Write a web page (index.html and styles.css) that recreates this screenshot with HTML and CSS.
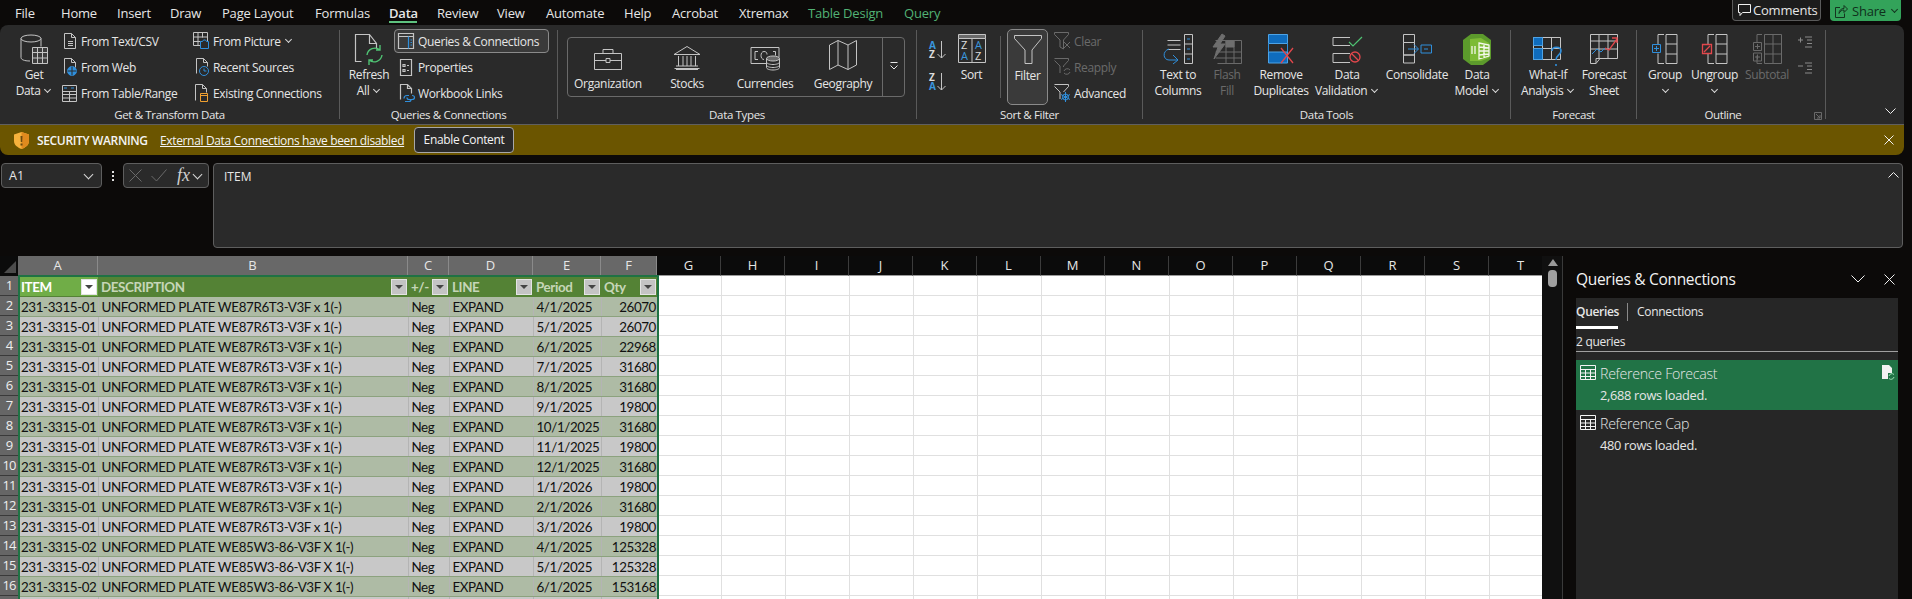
FILE: index.html
```html
<!doctype html>
<html lang="en-us">
<head>
<title>Book1 - Excel</title>
<link rel="stylesheet" href="styles.css">
</head>
<body>

<div class="topbar">
  <div class="tabs">
    <span>File</span><span>Home</span><span>Insert</span><span>Draw</span><span>Page Layout</span><span>Formulas</span>
    <span class="on">Data</span><span>Review</span><span>View</span><span>Automate</span><span>Help</span><span>Acrobat</span><span>Xtremax</span>
    <span class="ctx">Table Design</span><span class="ctx">Query</span>
  </div>
  <div class="top-btns">
    <div class="comments">
      <svg width="13" height="14" viewBox="0 0 13 14"><path class="wh" d="M.5 1.500h12v8H4.500l-2.500 3v-3H.5z"/></svg>
      Comments
    </div>
    <div class="share">
      <svg width="13" height="14" viewBox="0 0 13 14"><path class="dk" d="M5 3.500H.5v10h9v-4M4 9.500c0-3 2-5 5-5v-3l3.500 3.500-3.500 3.500v-2.500c-2 0-4 1-5 3.500z"/></svg>
      Share <i class="chev dark"></i>
    </div>
  </div>
</div>

<div class="ribbon">

  <div class="grp g1">
    <div class="body">
      <div class="big b-get">
        <div class="ic"><svg width="28" height="31" viewBox="0 0 28 31"><ellipse cx="11" cy="4.500" rx="10" ry="3.500"/><path d="M1 4.500v19c0 2 3 3.500 9 3.500M21 4.500v8"/><path class="fillg" d="M12.500 13.500h15v16h-15zM12.500 18.500h15M12.500 24h15M17.500 13.500v16M22.500 13.500v16"/></svg></div>
        <span>Get</span><span>Data <i class="chev"></i></span>
      </div>
      <div class="col c1">
        <div class="sm"><svg width="17" height="16" viewBox="0 0 17 16"><path d="M3.500.5h7l4 4v11h-11zM10.500.5v4h4M7 8.500h5M7 10.500h5M7 12.500h5"/></svg>From Text/CSV</div>
        <div class="sm"><svg width="17" height="18" viewBox="0 0 17 18"><path d="M3.500 15.500V.5h7l4 4v5M10.500.5v4h4"/><circle class="bf" cx="11" cy="13" r="4.500"/><path class="bk" d="M6.500 13h9M11 8.500v9"/></svg>From Web</div>
        <div class="sm"><svg width="17" height="17" viewBox="0 0 17 17"><path d="M1.500.5h14v16h-14zM1.500 6.500h14M1.500 9.500h14M1.500 13h14M8.500 6.500v10"/><path class="b" d="M3 3h3M10 3h3"/></svg>From Table/Range</div>
      </div>
      <div class="col c2">
        <div class="sm"><svg width="17" height="18" viewBox="0 0 17 18"><path d="M.5.5h14v9M.5.5v13h7M.5 5h14M.5 9.500h7M5 .5v13M9.500.5v5"/><path class="bfl" d="M7.500 9.500h2l1-1.500h2l1 1.500h2v7h-8z"/><circle class="bk" cx="11.500" cy="13" r="1.500"/></svg>From Picture <i class="chev"></i></div>
        <div class="sm"><svg width="17" height="18" viewBox="0 0 17 18"><path d="M3.500 15.500V.5h7l4 4v4M10.500.5v4h4"/><circle class="b" cx="11" cy="13" r="4.500"/><path class="b" d="M11 10.500V13h2.500"/></svg>Recent Sources</div>
        <div class="sm"><svg width="17" height="18" viewBox="0 0 17 18"><path d="M2.500 16.500V.5h7l4 4v4M9.500.5v4h4"/><path class="o" d="M7.500 9.500h7v8h-7zM7.500 11.500h7"/></svg>Existing Connections</div>
      </div>
    </div>
    <div class="lbl">Get &amp; Transform Data</div>
  </div>

  <div class="grp g2">
    <div class="body">
      <div class="big b-ref">
        <div class="ic"><svg width="30" height="31" viewBox="0 0 30 31"><path d="M7.500 27.500h-6V.5h14l7 9v5M15.500.5v9h7"/><path class="g" d="M13 21a8 8 0 0 1 13-5M28 21a8 8 0 0 1-13 5M26 11v5h-4M15 31v-5h4"/></svg></div>
        <span>Refresh</span><span>All <i class="chev"></i></span>
      </div>
      <div class="col c3">
        <div class="sm sel"><svg width="17" height="16" viewBox="0 0 17 16"><path d="M.5.5h15v15H.5zM.5 3.500h15"/><path class="b" d="M10.500 3.500v12M12.500 7h1.500M12.500 9.500h1.500M12.500 12h1.500"/></svg>Queries &amp; Connections</div>
        <div class="sm"><svg width="17" height="17" viewBox="0 0 17 17"><path d="M2.500.5h11v16h-11zM5 5.500h2v2H5zM5 10.500h2v2H5zM9 6.500h2M9 11.500h2"/></svg>Properties</div>
        <div class="sm"><svg width="17" height="18" viewBox="0 0 17 18"><path d="M2.500 15.500V.5h7l4 4v5M9.500.5v4h4"/><path class="b" d="M6 14.500c0-2 1-3 3-3h2M14 11.500c2 0 2.500 1 2.500 2s-1 2-2.500 2h-3c-1.500 0-2-1-2-2M7 17.500h4c1.500 0 2-1 2-2"/></svg>Workbook Links</div>
      </div>
    </div>
    <div class="lbl">Queries &amp; Connections</div>
  </div>

  <div class="grp g3">
    <div class="body">
      <div class="types">
        <div class="type"><svg width="28" height="21" viewBox="0 0 28 21"><path d="M.5 4.500h27v16H.5zM9 4.500v-4h10v4M.5 11.500h11.500M16 11.500h11.500M12 9.500h4v4h-4z"/></svg>Organization</div>
        <div class="type"><svg width="28" height="24" viewBox="0 0 28 24"><path d="M1 8.500L14 .5l13 8zM3 8.500h22M1.500 22.500h25M3 20h22M3 23.500h22M5.500 10v10M10 10v10M14 10v10M18 10v10M22.500 10v10"/></svg>Stocks</div>
        <div class="type"><svg width="30" height="26" viewBox="0 0 30 26"><path d="M17 19.500H1V3.500h28v10"/><path d="M8 7.500H5v8h3M23 7.500h2.500v4M14 7.500c-4 0-4 8 0 8M14 7.500c2 0 3 1 3 3"/><ellipse class="fillh" cx="23" cy="14.500" rx="6.500" ry="2.500"/><path d="M16.500 14.500v9c0 1.500 3 2.500 6.500 2.500s6.500-1 6.500-2.500v-9M16.500 18c0 1.500 3 2.500 6.500 2.500s6.500-1 6.500-2.500M16.500 21c0 1.500 3 2.500 6.500 2.500s6.500-1 6.500-2.500"/></svg>Currencies</div>
        <div class="type"><svg width="28" height="30" viewBox="0 0 28 30"><path d="M.5 5L9 .5 19 5l8.500-4.500V25L19 29.500 9 25 .5 29.500zM9 .5V25M19 5v24.500"/></svg>Geography</div>
        <div class="more"><svg width="8" height="8" viewBox="0 0 8 8"><path d="M.5.500h7M.5 3.500L4 7l3.500-3.500"/></svg></div>
      </div>
    </div>
    <div class="lbl">Data Types</div>
  </div>

  <div class="grp g4">
    <div class="body">
      <div class="az">
        <svg width="17" height="18" viewBox="0 0 17 18"><text class="tb" x="0" y="8">A</text><text class="tw" x="0" y="17">Z</text><path d="M12.500 0v17M8.500 13l4 4 4-4"/></svg>
        <svg width="17" height="18" viewBox="0 0 17 18"><text class="tw" x="0" y="8">Z</text><text class="tb" x="0" y="17">A</text><path d="M12.500 0v17M8.500 13l4 4 4-4"/></svg>
      </div>
      <div class="big b-sort">
        <div class="ic"><svg width="28" height="29" viewBox="0 0 28 29"><path class="fillh" d="M.5.500h27v4H.5z"/><path d="M.5 4.500v24h27v-24M14 4.500v24"/><text class="tw big-t" x="3" y="15">Z</text><text class="tb big-t" x="3" y="26">A</text><text class="tb big-t" x="17" y="15">A</text><text class="tw big-t" x="17" y="26">Z</text></svg></div>
        <span>Sort</span>
      </div>
      <div class="vsep"></div>
      <div class="big b-filter">
        <div class="ic"><svg width="28" height="29" viewBox="0 0 28 29"><path d="M.5.500h27v3L18 15v13.500h-7V15L.5 3.500z"/></svg></div>
        <span>Filter</span>
      </div>
      <div class="col c4">
        <div class="sm off"><svg width="17" height="18" viewBox="0 0 17 18"><path class="dim" d="M.5.500h14v2L9.500 8v9L6 15V8L.5 2.500zM10 10l6 6M16 10l-6 6"/></svg>Clear</div>
        <div class="sm off"><svg width="17" height="18" viewBox="0 0 17 18"><path class="dim" d="M.5.500h14v2L9.500 8v1M6 15V8L.5 2.500M10 13a3.500 3.500 0 0 1 6 -1M16 14a3.500 3.500 0 0 1-6 1"/></svg>Reapply</div>
        <div class="sm"><svg width="17" height="18" viewBox="0 0 17 18"><path d="M.5.500h14v2L9.500 8M6 15V8L.5 2.500"/><circle class="b" cx="11.500" cy="13" r="3"/><path class="b" d="M11.500 8v10M7 10.500l9 5M16 10.500l-9 5"/></svg>Advanced</div>
      </div>
    </div>
    <div class="lbl">Sort &amp; Filter</div>
  </div>

  <div class="grp g5">
    <div class="body">
      <div class="big b-ttc">
        <div class="ic"><svg width="30" height="30" viewBox="0 0 30 30"><path d="M21.500.5h8v29h-8zM21.500 10h8M21.500 20h8"/><path class="b" d="M24 5h3M24 15h3M24 25h3"/><path d="M4.500 6.500h13M4.500 11h13M4.500 15.500h13"/><path class="b" d="M6 15c-7 2-6 11 0 11h8M10 21l5 5-5 4"/></svg></div>
        <span>Text to</span><span>Columns</span>
      </div>
      <div class="big b-ff off">
        <div class="ic"><svg width="30" height="30" viewBox="0 0 30 30"><path class="dim" d="M3.500 6.500h26v23h-24M14 6.500v23M22 6.500v23M3.500 18h26M3.500 24h26"/><path class="fillm" d="M10 0L1 13h5L2 25 13 10H8l5-8z"/><path class="fillm" d="M14 7h8v6h-8z"/></svg></div>
        <span>Flash</span><span>Fill</span>
      </div>
      <div class="big b-rd">
        <div class="ic"><svg width="26" height="30" viewBox="0 0 26 30"><path class="bs" d="M.5.500h19v9H.5zM.5 18h19v11H.5z"/><path class="b" d="M.5 9.500v8.500M19.500 9.500v8.500"/><path class="r" d="M13 14l12 15M25 14L13 29"/></svg></div>
        <span>Remove</span><span>Duplicates</span>
      </div>
      <div class="big b-dv">
        <div class="ic"><svg width="31" height="30" viewBox="0 0 31 30"><path d="M18 11.500H1v-8h17M18 19.500H1v9h17"/><path class="g2" d="M17 8l4 4 9-9"/><circle class="r" cx="23" cy="23" r="5"/><path class="r" d="M20 20l6 6"/></svg></div>
        <span>Data</span><span>Validation <i class="chev"></i></span>
      </div>
      <div class="big b-con">
        <div class="ic"><svg width="29" height="30" viewBox="0 0 29 30"><path d="M.5.500h11v8H.5zM.5 21h11v8H.5zM.5 8.500h11v12.500H.5z"/><path class="b" d="M5 15h10M11 10.500l4.500 4.500-4.500 4.500M18 11h10.500v8H18zM21 15h4"/></svg></div>
        <span>Consolidate</span>
      </div>
      <div class="big b-dm">
        <div class="ic"><svg width="28" height="31" viewBox="0 0 28 31"><path class="hex" d="M8 0h12l8 6v19l-8 6H8l-8-6V6z"/><path class="hex2" d="M7 5l11-1 8 5v15l-8 3H7z"/><path class="wg" d="M16 9l10 2v11l-10 3zM21 10v14M16 13l10 1M16 17h10M16 21l10-1"/><path class="wg" d="M12 12v8M9 16v-1M9 12v8"/></svg></div>
        <span>Data</span><span>Model <i class="chev"></i></span>
      </div>
    </div>
    <div class="lbl">Data Tools</div>
  </div>

  <div class="grp g6">
    <div class="body">
      <div class="big b-wi">
        <div class="ic"><svg width="30" height="32" viewBox="0 0 30 32"><path d="M.5 3.500h27v22H.5zM9.500 3.500v22M18.500 3.500v22M.5 14.500h27"/><path class="bs" d="M.5 3.500h9v8H.5zM.5 14.500h9v11H.5z"/><path class="b2" d="M19 17c0-5 9-5 9 0 0 4-5 4-5 9M23 30v2"/></svg></div>
        <span>What-If</span><span>Analysis <i class="chev"></i></span>
      </div>
      <div class="big b-fs">
        <div class="ic"><svg width="29" height="31" viewBox="0 0 29 31"><path d="M.5.500h27v24H10l-4 5H.5zM.5 7h27M.5 15h27M9 .5v24M18 .5v24M6 29.500v-5h4"/><path class="b" d="M2 20l5-5 4 3 4-4"/><path class="r" d="M15 14l4 2 8-11M22 4h5v5"/></svg></div>
        <span>Forecast</span><span>Sheet</span>
      </div>
    </div>
    <div class="lbl">Forecast</div>
  </div>

  <div class="grp g7">
    <div class="body">
      <div class="big b-gr">
        <div class="ic"><svg width="26" height="30" viewBox="0 0 26 30"><path d="M14 .5h11v29H14zM14 10h11M14 20h11M12 .5H6v10M12 29.500H6v-10"/><path class="bfl" d="M.5 10.500h8v8h-8z"/><path class="b" d="M2 14.500h5M4.500 12v5"/></svg></div>
        <span>Group</span><i class="chev solo"></i>
      </div>
      <div class="big b-un">
        <div class="ic"><svg width="26" height="30" viewBox="0 0 26 30"><path d="M14 .5h11v29H14zM14 10h11M14 20h11M12 .5H6v10M12 29.500H6v-10"/><path class="rf" d="M.5 10.500h9v9h-9zM2 18l6-6"/></svg></div>
        <span>Ungroup</span><i class="chev solo"></i>
      </div>
      <div class="big b-st off">
        <div class="ic"><svg width="29" height="30" viewBox="0 0 29 30"><path class="dim" d="M11.500.5h17v29h-17zM11.500 10h17M11.500 20h17M20 .5v29M9 .5H4v8M9 29.500H4v-8M.5 8.500h8v8h-8zM2 12.500h5M4.500 10v5M.5 19h8v8h-8zM2 23h5M4.500 20.500v5"/></svg></div>
        <span>Subtotal</span>
      </div>
      <div class="outl">
        <svg width="15" height="12" viewBox="0 0 15 12"><path class="dim2" d="M0 4h5M2.500 1.500v5M7 1h7M9 4h5M9 7.500h5M7 11h7"/></svg>
        <svg width="15" height="12" viewBox="0 0 15 12"><path class="dim2" d="M0 4h5M7 1h7M9 4h5M9 7.500h5M7 11h7"/></svg>
      </div>
    </div>
    <div class="lbl l7">Outline<svg class="launch" width="8" height="8" viewBox="0 0 8 8"><path class="dim" d="M.5 7.500V.5h7v7zM2 2l4 4M3 6h3V3"/></svg></div>
  </div>

  <div class="collapse"><svg width="11" height="7" viewBox="0 0 11 7"><path class="wh" d="M.5.500l5 5 5-5"/></svg></div>
</div>

<div class="warn">
  <svg class="shield" width="15" height="17" viewBox="0 0 15 17"><path class="sh" d="M7.500 0L15 2.500V9c0 4-3.500 6.500-7.500 8C3.500 15.500 0 13 0 9V2.500z"/><path class="sh2" d="M7.500 0L15 2.500V9c0 4-3.500 6.500-7.500 8z"/><path class="sh3" d="M6.500 4h2l-.300 6h-1.400zM6.500 11.500h2v2h-2z"/></svg>
  <b>SECURITY WARNING</b>
  <a>External Data Connections have been disabled</a>
  <div class="enable">Enable Content</div>
  <svg class="warn-x" width="10" height="10" viewBox="0 0 10 10"><path class="wh" d="M.5.500l9 9M9.500.500l-9 9"/></svg>
</div>

<div class="fbar">
  <div class="namebox">A1 <i class="chev lg"></i></div>
  <div class="dots"><i></i><i></i><i></i></div>
  <div class="fbtns">
    <svg width="13" height="13" viewBox="0 0 13 13"><path class="dim" d="M.5.500l12 12M12.500.500l-12 12"/></svg>
    <svg width="16" height="13" viewBox="0 0 16 13"><path class="dim" d="M.5 7l5 5L15.500.5"/></svg>
    <span class="fx">fx</span>
    <i class="chev lg"></i>
  </div>
  <div class="finput">
    ITEM
    <svg class="f-up" width="11" height="7" viewBox="0 0 11 7"><path class="wh" d="M.5 6.500l5-5 5 5"/></svg>
  </div>
</div>

<div class="work">
  <div class="sheet">
    <div class="cols">
      <div class="corner"><svg width="12" height="12" viewBox="0 0 12 12"><path class="tri" d="M12 0v12H0z"/></svg></div>
      <div class="ch sl a">A</div><div class="ch sl b-col">B</div><div class="ch sl c">C</div><div class="ch sl d">D</div><div class="ch sl e">E</div><div class="ch sl f">F</div>
      <div class="ch">G</div><div class="ch">H</div><div class="ch">I</div><div class="ch">J</div><div class="ch">K</div><div class="ch">L</div><div class="ch">M</div>
      <div class="ch">N</div><div class="ch">O</div><div class="ch">P</div><div class="ch">Q</div><div class="ch">R</div><div class="ch">S</div><div class="ch">T</div>
    </div>
    <div class="cells">
      <div class="rows">
        <div>1</div><div>2</div><div>3</div><div>4</div><div>5</div><div>6</div><div>7</div><div>8</div><div>9</div><div>10</div><div>11</div><div>12</div><div>13</div><div>14</div><div>15</div><div>16</div><div></div>
      </div>
      <div class="tblwrap">
        <table class="tbl">
          <colgroup><col class="w-a"><col class="w-b"><col class="w-c"><col class="w-d"><col class="w-e"><col class="w-f"></colgroup>
          <thead>
            <tr>
              <th class="first"><div class="th">ITEM<i class="fb fb1"></i></div></th>
              <th><div class="th">DESCRIPTION<i class="fb"></i></div></th>
              <th><div class="th">+/-<i class="fb"></i></div></th>
              <th><div class="th">LINE<i class="fb"></i></div></th>
              <th><div class="th">Period<i class="fb"></i></div></th>
              <th><div class="th">Qty<i class="fb"></i></div></th>
            </tr>
          </thead>
          <tbody>
            <tr><td>231-3315-01</td><td>UNFORMED PLATE WE87R6T3-V3F x 1(-)</td><td>Neg</td><td>EXPAND</td><td>4/1/2025</td><td class="n">26070</td></tr>
            <tr><td>231-3315-01</td><td>UNFORMED PLATE WE87R6T3-V3F x 1(-)</td><td>Neg</td><td>EXPAND</td><td>5/1/2025</td><td class="n">26070</td></tr>
            <tr><td>231-3315-01</td><td>UNFORMED PLATE WE87R6T3-V3F x 1(-)</td><td>Neg</td><td>EXPAND</td><td>6/1/2025</td><td class="n">22968</td></tr>
            <tr><td>231-3315-01</td><td>UNFORMED PLATE WE87R6T3-V3F x 1(-)</td><td>Neg</td><td>EXPAND</td><td>7/1/2025</td><td class="n">31680</td></tr>
            <tr><td>231-3315-01</td><td>UNFORMED PLATE WE87R6T3-V3F x 1(-)</td><td>Neg</td><td>EXPAND</td><td>8/1/2025</td><td class="n">31680</td></tr>
            <tr><td>231-3315-01</td><td>UNFORMED PLATE WE87R6T3-V3F x 1(-)</td><td>Neg</td><td>EXPAND</td><td>9/1/2025</td><td class="n">19800</td></tr>
            <tr><td>231-3315-01</td><td>UNFORMED PLATE WE87R6T3-V3F x 1(-)</td><td>Neg</td><td>EXPAND</td><td>10/1/2025</td><td class="n">31680</td></tr>
            <tr><td>231-3315-01</td><td>UNFORMED PLATE WE87R6T3-V3F x 1(-)</td><td>Neg</td><td>EXPAND</td><td>11/1/2025</td><td class="n">19800</td></tr>
            <tr><td>231-3315-01</td><td>UNFORMED PLATE WE87R6T3-V3F x 1(-)</td><td>Neg</td><td>EXPAND</td><td>12/1/2025</td><td class="n">31680</td></tr>
            <tr><td>231-3315-01</td><td>UNFORMED PLATE WE87R6T3-V3F x 1(-)</td><td>Neg</td><td>EXPAND</td><td>1/1/2026</td><td class="n">19800</td></tr>
            <tr><td>231-3315-01</td><td>UNFORMED PLATE WE87R6T3-V3F x 1(-)</td><td>Neg</td><td>EXPAND</td><td>2/1/2026</td><td class="n">31680</td></tr>
            <tr><td>231-3315-01</td><td>UNFORMED PLATE WE87R6T3-V3F x 1(-)</td><td>Neg</td><td>EXPAND</td><td>3/1/2026</td><td class="n">19800</td></tr>
            <tr><td>231-3315-02</td><td>UNFORMED PLATE WE85W3-86-V3F X 1(-)</td><td>Neg</td><td>EXPAND</td><td>4/1/2025</td><td class="n">125328</td></tr>
            <tr><td>231-3315-02</td><td>UNFORMED PLATE WE85W3-86-V3F X 1(-)</td><td>Neg</td><td>EXPAND</td><td>5/1/2025</td><td class="n">125328</td></tr>
            <tr><td>231-3315-02</td><td>UNFORMED PLATE WE85W3-86-V3F X 1(-)</td><td>Neg</td><td>EXPAND</td><td>6/1/2025</td><td class="n">153168</td></tr>
            <tr><td></td><td></td><td></td><td></td><td></td><td></td></tr>
          </tbody>
        </table>
      </div>
      <div class="blank"></div>
    </div>
  </div>

  <div class="vscroll">
    <svg width="10" height="7" viewBox="0 0 10 7"><path class="sc" d="M5 0l5 7H0z"/></svg>
    <div class="thumb"></div>
  </div>

  <div class="pane">
    <div class="pane-head">
      <span>Queries &amp; Connections</span>
      <svg class="p-down" width="14" height="8" viewBox="0 0 14 8"><path class="wh" d="M.5.500L7 7l6.500-6.500"/></svg>
      <svg class="p-x" width="11" height="11" viewBox="0 0 11 11"><path class="wh" d="M.5.500l10 10M10.500.500l-10 10"/></svg>
    </div>
    <div class="pane-body">
      <div class="pane-tabs"><span class="on">Queries</span><i></i><span>Connections</span></div>
      <div class="count">2 queries</div>
      <div class="q sel">
        <svg width="16" height="15" viewBox="0 0 16 15"><path class="wt" d="M.5.500h15v14H.5zM.5 4.500h15M.5 8h15M.5 11.500h15M5.500 4.500v10M10.500 4.500v10"/></svg>
        <div class="q-name">Reference Forecast</div>
        <svg class="q-doc" width="13" height="15" viewBox="0 0 13 15"><path class="docf" d="M0 0h7l3 3v5H6v6H0z"/><path class="q-arr" d="M7 11a3 3 0 0 1 5-1.500M12 12a3 3 0 0 1-5 1.500"/></svg>
        <div class="q-sub">2,688 rows loaded.</div>
      </div>
      <div class="q">
        <svg width="16" height="15" viewBox="0 0 16 15"><path class="wt" d="M.5.500h15v14H.5zM.5 4.500h15M.5 8h15M.5 11.500h15M5.500 4.500v10M10.500 4.500v10"/></svg>
        <div class="q-name">Reference Cap</div>
        <div class="q-sub">480 rows loaded.</div>
      </div>
    </div>
  </div>
</div>

</body>
</html>
```

FILE: styles.css
```css
html, body {
  margin: 0;
  padding: 0;
  height: 599px;
  overflow: hidden;
}
body {
  font: 12px "Open Sans", "Noto Sans", sans-serif;
  color: #e6e6e6;
  background: #0c0a09;
}
svg {
  display: block;
  fill: none;
  stroke: #c4c4c4;
  flex: none;
  overflow: visible;
}
.b { stroke: #2f8fdc; }
.b2 { stroke: #2f8fdc; stroke-width: 1.6; }
.bs { stroke: #4da3e6; fill: #0f6cbd; }
.bf { stroke: #2f8fdc; fill: #2f8fdc; }
.bfl { stroke: #2f8fdc; fill: #2b2b2b; }
.bk { stroke: #2a2a2a; }
.g { stroke: #4fc273; stroke-width: 1.4; }
.g2 { stroke: #4fc273; stroke-width: 1.2; }
.r { stroke: #e2474c; stroke-width: 1.3; }
.rf { stroke: #e2474c; fill: #2b2b2b; stroke-width: 1.3; }
.o { stroke: #f0a030; }
.dim { stroke: #6a6a6a; }
.dim2 { stroke: #8a8a8a; }
.wh { stroke: #f0f0f0; }
.dk { stroke: #14341f; }
.fillg { fill: #3c3c3c; }
.fillh { fill: #6a6a6a; }
.fillm { fill: #6e6e6e; stroke: #6e6e6e; }
.hex { fill: #5c9a2c; stroke: none; }
.hex2 { fill: #7dbb35; stroke: none; }
.wg { stroke: #f4f8ea; stroke-width: 1.3; }
.tb, .tw {
  font: 700 10px "Open Sans", sans-serif;
  stroke: none;
}
.tb { fill: #3a96dd; }
.tw { fill: #dcdcdc; }
.big-t { font-size: 11px; font-weight: 400; }

/* top strip */
.topbar {
  height: 25px;
  display: flex;
  justify-content: space-between;
}
.tabs {
  display: grid;
  grid-template-columns: 46px 56px 53px 52px 93px 74px 48px 60px 49px 78px 48px 67px 69px 96px 40px;
  padding-left: 15px;
  font-size: 13px;
  line-height: 26px;
  white-space: nowrap;
  letter-spacing: -.2px;
}
.tabs .on {
  font-weight: 600;
  position: relative;
}
.tabs .on::after {
  content: "";
  position: absolute;
  left: 0;
  width: 28px;
  top: 21px;
  height: 2px;
  background: #5ec27f;
}
.tabs .ctx { color: #52b275; }
.top-btns {
  display: flex;
  padding-right: 11px;
  gap: 9px;
}
.comments, .share {
  height: 21px;
  border-radius: 0 0 4px 4px;
  display: flex;
  align-items: center;
  font-size: 13px;
  letter-spacing: -.2px;
  box-sizing: border-box;
}
.comments {
  width: 89px;
  gap: 2px;
  border: 1px solid #5a5a5a;
  border-top: 0;
  padding-left: 5px;
  background: #1c1c1c;
}
.share {
  width: 71px;
  gap: 4px;
  padding-left: 5px;
  background: #33a35a;
  color: #10301c;
}

/* ribbon */
.ribbon {
  width: 1904px;
  height: 99px;
  background: #2a2a2a;
  border-radius: 8px 8px 0 0;
  display: flex;
  position: relative;
  border-bottom: 1px solid #5f5f5f;
  letter-spacing: -.35px;
}
.grp {
  height: 89px;
  margin-top: 5px;
  box-sizing: border-box;
  border-right: 1px solid #5a5a5a;
  flex: none;
}
.g1 { width: 340px; }
.g2 { width: 218px; }
.g3 { width: 359px; }
.g4 { width: 226px; }
.g5 { width: 368px; }
.g6 { width: 126px; }
.g7 { width: 189px; }
.body {
  height: 78px;
  margin-top: -1px;
  display: flex;
}
.lbl {
  height: 12px;
  line-height: 12px;
  margin-top: 2px;
  text-align: center;
  white-space: nowrap;
  font-size: 11.5px;
}
.l7 {
  padding-right: 16px;
  position: relative;
}
.launch {
  position: absolute;
  right: 3px;
  top: 3px;
}
.big {
  display: flex;
  flex-direction: column;
  align-items: center;
  line-height: 16px;
  white-space: nowrap;
  flex: none;
}
.ic {
  height: 38px;
  padding-top: 5px;
  box-sizing: border-box;
}
.off {
  color: #6a6a6a;
}
.chev {
  display: inline-block;
  width: 4px;
  height: 4px;
  border-right: 1px solid #d8d8d8;
  border-bottom: 1px solid #d8d8d8;
  transform: rotate(45deg);
  margin: 0 2px 3px 2px;
}
.chev.dark { border-color: #14341f; }
.chev.solo { margin-top: 4px; }
.chev.lg {
  width: 6px;
  height: 6px;
}
.col {
  display: flex;
  flex-direction: column;
  gap: 2px;
  flex: none;
}
.sm {
  height: 24px;
  display: flex;
  align-items: center;
  gap: 3px;
  padding-left: 4px;
  box-sizing: border-box;
  white-space: nowrap;
}
.b-get { width: 60px; margin-left: 4px; }
.c1 { width: 132px; margin-left: -7px; }
.c2 { width: 140px; }
.b-ref { width: 52px; margin-left: 3px; }
.c3 { width: 155px; margin-left: -1px; }
.sel.sm {
  border: 1px solid #8a8a8a;
  border-radius: 4px;
  background: #3a3a3a;
  padding-left: 3px;
}
.types {
  margin: 8px 0 0 9px;
  width: 338px;
  height: 60px;
  box-sizing: border-box;
  border: 1px solid #6a6a6a;
  border-radius: 4px;
  display: grid;
  grid-template-columns: 80px 78px 78px 78px 1fr;
}
.type {
  display: flex;
  flex-direction: column;
  align-items: center;
  justify-content: flex-end;
  white-space: nowrap;
  padding-bottom: 4px;
  line-height: 16px;
  gap: 6px;
}
.more {
  border-left: 1px solid #6a6a6a;
  padding: 24px 0 0 7px;
}
.more svg { stroke: #e6e6e6; }
.az {
  margin: 12px 0 0 12px;
  width: 28px;
  display: flex;
  flex-direction: column;
  gap: 14px;
  flex: none;
}
.b-sort { width: 29px; }
.vsep {
  width: 1px;
  height: 62px;
  margin: 7px 6px 0 14px;
  background: #5a5a5a;
  flex: none;
}
.b-filter {
  width: 41px;
  height: 76px;
  box-sizing: border-box;
  border: 1px solid #8a8a8a;
  border-radius: 5px;
  background: #3a3a3a;
}
.c4 { margin-left: 2px; }
.b-ttc { width: 66px; margin-left: 2px; }
.b-ff { width: 32px; }
.b-rd { width: 76px; }
.b-dv { width: 56px; }
.b-con { width: 84px; }
.b-dm { width: 36px; }
.b-wi { width: 70px; margin-left: 2px; }
.b-fs { width: 42px; }
.b-gr { width: 52px; margin-left: 2px; }
.b-un { width: 47px; }
.b-st { width: 58px; }
.outl {
  margin: 7px 0 0 2px;
  display: flex;
  flex-direction: column;
  gap: 14px;
}
.collapse {
  margin: 83px 0 0 59px;
}

/* message bar */
.warn {
  width: 1904px;
  height: 30px;
  background: #6b5500;
  border-radius: 0 0 8px 8px;
  display: flex;
  align-items: center;
  box-sizing: border-box;
  padding-left: 14px;
  white-space: nowrap;
  color: #f4f4f4;
  letter-spacing: -.35px;
}
.sh { fill: #f6b23c; stroke: none; }
.sh2 { fill: #e08a1e; stroke: none; }
.sh3 { fill: #6b4a10; stroke: none; }
.warn b {
  font-weight: 600;
  margin-left: 8px;
  width: 123px;
}
.warn a {
  text-decoration: underline;
  width: 254px;
}
.enable {
  width: 100px;
  height: 26px;
  line-height: 24px;
  text-align: center;
  box-sizing: border-box;
  border: 1px solid #a8a8a8;
  border-radius: 4px;
  background: #2a2a2a;
}
.warn-x { margin-left: auto; margin-right: 10px; }

/* formula bar */
.fbar {
  height: 85px;
  margin-top: 8px;
  display: flex;
  padding-left: 1px;
  width: 1903px;
  box-sizing: border-box;
}
.namebox {
  width: 101px;
  height: 25px;
  box-sizing: border-box;
  border: 1px solid #5e5e5e;
  border-radius: 4px;
  background: #2a2a2a;
  padding: 0 7px;
  display: flex;
  align-items: center;
  justify-content: space-between;
  font-size: 12.500px;
}
.dots {
  width: 21px;
  height: 25px;
  display: flex;
  flex-direction: column;
  align-items: center;
  justify-content: center;
  gap: 2px;
}
.dots i {
  width: 2px;
  height: 2px;
  background: #e0e0e0;
}
.fbtns {
  width: 86px;
  height: 25px;
  box-sizing: border-box;
  border: 1px solid #5e5e5e;
  border-radius: 4px;
  background: #2a2a2a;
  display: flex;
  align-items: center;
  padding-left: 5px;
  gap: 9px;
}
.fx {
  font: italic 18px "Liberation Serif", serif;
  margin-left: 1px;
  margin-right: -7px;
  color: #d0d0d0;
}
.finput {
  margin-left: 4px;
  flex: 1;
  height: 85px;
  box-sizing: border-box;
  border: 1px solid #5e5e5e;
  border-radius: 4px;
  background: #2a2a2a;
  padding: 4px 0 0 10px;
  position: relative;
}
.f-up {
  position: absolute;
  right: 3px;
  top: 7px;
}

/* sheet */
.work {
  margin-top: 8px;
  display: flex;
  height: 343px;
}
.sheet {
  width: 1542px;
  overflow: hidden;
  flex: none;
}
.cols {
  height: 20px;
  display: flex;
  color: #e6e6e6;
}
.corner {
  width: 18px;
  flex: none;
  background: #0b0b0b;
  padding: 5px 0 0 4px;
  box-sizing: border-box;
}
.tri { fill: #4c4c4c; stroke: none; }
.ch {
  width: 64px;
  flex: none;
  box-sizing: border-box;
  text-align: center;
  line-height: 19px;
  font-size: 13px;
  border-right: 1px solid #3c3c3c;
  border-bottom: 1px solid #9a9a9a;
  background: #0b0b0b;
}
.ch.sl {
  background: #686868;
  border-right-color: #8a8a8a;
  border-bottom: 0;
}
.a { width: 80px; }
.b-col { width: 310px; }
.c { width: 41px; }
.d { width: 84px; }
.e { width: 68px; }
.f { width: 56px; }
.cells {
  display: flex;
  height: 323px;
}
.rows {
  width: 18px;
  flex: none;
  font-size: 13px;
  text-align: center;
  color: #eee;
}
.rows div {
  height: 20px;
  line-height: 19px;
  box-sizing: border-box;
  background: #666;
  border-bottom: 1px solid #3a3a3a;
  letter-spacing: -1px;
}
.tblwrap {
  width: 641px;
  flex: none;
  box-sizing: border-box;
  margin-top: -1px;
  border: 2px solid #1f7244;
  border-bottom: 0;
  overflow: hidden;
}
.tbl {
  border-collapse: collapse;
  table-layout: fixed;
  width: 637px;
  font: 13.400px "Lato", "Liberation Sans", sans-serif;
  letter-spacing: -.4px;
  color: #111;
}
.w-a { width: 78px; }
.w-b { width: 310px; }
.w-c { width: 41px; }
.w-d { width: 84px; }
.w-e { width: 68px; }
.w-f { width: 56px; }
.tbl th {
  height: 19px;
  padding: 0;
  background: #548235;
  color: #c6d6b8;
  font-weight: 700;
  text-align: left;
  border-bottom: 1px solid #548235;
}
.tbl th.first {
  background: #70ad47;
  color: #fff;
}
.th {
  display: flex;
  justify-content: space-between;
  align-items: center;
  padding: 0 1px 0 3px;
  height: 18px;
  white-space: nowrap;
}
.first .th { padding-left: 1px; }
.fb {
  width: 16px;
  height: 16px;
  background: #c4c4c4;
  border: 1px solid #e4e4e4;
  box-sizing: border-box;
  position: relative;
}
.fb::after {
  content: "";
  position: absolute;
  left: 3px;
  top: 5px;
  border: 4px solid transparent;
  border-top: 4px solid #444;
  border-bottom: 0;
}
.fb1 { background: #fff; }
.tbl td {
  height: 19px;
  padding: 0 1px 0 3px;
  white-space: nowrap;
  overflow: hidden;
  border-bottom: 1px solid #8ca27e;
  border-right: 1px solid #b4b4b4;
}
.tbl td:first-child { padding-left: 1px; }
.tbl tr:nth-child(odd) td { background: #aebba5; }
.tbl tr:nth-child(even) td { background: #c8c8c8; }
.tbl td.n { text-align: right; border-right: 0; padding-right: 1px; }
.blank {
  flex: 1;
  background-color: #fff;
  background-image:
    repeating-linear-gradient(to bottom, transparent 0 19px, #e0e0e0 19px 20px),
    repeating-linear-gradient(to right, transparent 0 62px, #e0e0e0 62px 63px, transparent 63px 64px);
}
.vscroll {
  width: 21px;
  flex: none;
  box-sizing: border-box;
  border-right: 1px solid #3a3a3a;
  padding: 3px 0 0 6px;
  background: #101010;
}
.sc { fill: #9a9a9a; stroke: none; }
.thumb {
  width: 9px;
  height: 17px;
  margin-top: 4px;
  border-radius: 4px;
  background: #a0a0a0;
}

/* side pane */
.pane {
  flex: 1;
  padding-left: 13px;
}
.pane-head {
  height: 42px;
  padding-top: 4px;
  box-sizing: border-box;
  display: flex;
  align-items: center;
  font-size: 15.500px;
  letter-spacing: -.3px;
  color: #f2f2f2;
  font-weight: 500;
  width: 322px;
}
.p-down { margin-left: auto; }
.p-x { margin: 0 3px 0 19px; }
.pane-body {
  width: 322px;
  height: 301px;
  background: #262626;
  letter-spacing: -.3px;
}
.pane-tabs {
  height: 28px;
  display: flex;
  align-items: flex-start;
  padding-top: 4px;
  box-sizing: border-box;
  line-height: 20px;
}
.pane-tabs .on {
  font-weight: 600;
  height: 24px;
  border-bottom: 3px solid #fff;
  width: 42px;
  white-space: nowrap;
}
.pane-tabs i {
  width: 1px;
  height: 18px;
  background: #8a8a8a;
  margin: 1px 9px 0 9px;
}
.count {
  height: 26px;
  line-height: 31px;
  box-sizing: border-box;
  border-bottom: 1px solid #a0a0a0;
  margin-bottom: 8px;
}
.wt { stroke: #f4f4f4; }
.q {
  height: 50px;
  display: grid;
  grid-template-columns: 20px 1fr 16px;
  align-content: start;
  padding-left: 4px;
  box-sizing: border-box;
}
.q.sel { background: #217346; }
.q > svg:first-child { margin-top: 5px; }
.q-name {
  font-size: 14.200px;
  line-height: 28px;
  font-weight: 300;
  letter-spacing: -.3px;
  white-space: nowrap;
}
.q-doc { margin-top: 5px; }
.docf { fill: #f2f2f2; stroke: none; }
.q-arr { stroke: #9ae0b4; }
.q-sub {
  grid-column: 2 / 4;
  font-size: 12.800px;
  line-height: 16px;
  margin-top: -1px;
  white-space: nowrap;
}
```
